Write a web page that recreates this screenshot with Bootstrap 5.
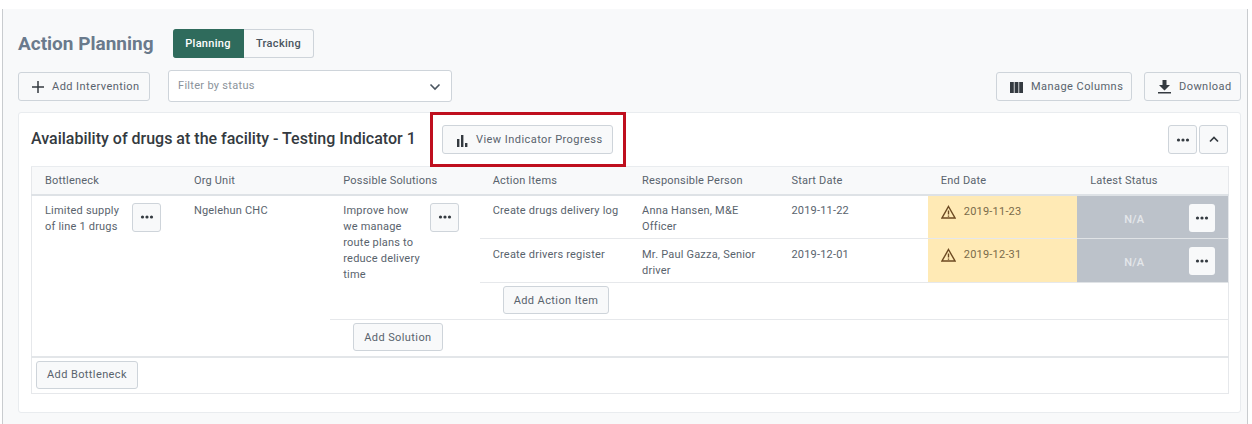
<!DOCTYPE html>
<html lang="en">
<head>
  <meta charset="UTF-8">
  <title>Action Planning</title>
  <link href="https://cdn.jsdelivr.net/npm/bootstrap@5.3.3/dist/css/bootstrap.min.css" rel="stylesheet">
  <style>
    html, body { height: 424px; overflow: hidden; }
    body {
      background: #fff;
      font-family: Roboto, "Liberation Sans", sans-serif;
      color: #4a5560;
    }
    .page-panel {
      margin: 9px 4px 0 2px;
      height: 415px;
      padding: 20px 6px 0 15px;
      background: #f8f9fa;
      border-left: 1px solid #c9cccf;
      border-right: 1px solid #c9cccf;
    }
    .page-title { font-size: 19px; font-weight: 700; color: #6a7a8c; line-height: 29px; margin: 0; width: 155px; }
    .plain-btn {
      background: #f8f9fa;
      border: 1px solid #ced4da;
      border-radius: 3px;
      color: #59636d;
      font-size: 11px;
      font-weight: 400;
      letter-spacing: .45px;
      height: 29px;
      padding: 1px 10px 0;
      display: inline-flex;
      align-items: center;
      white-space: nowrap;
    }
    .plain-btn svg { flex: none; }
    .mode-toggle .plain-btn { border-radius: 0 3px 3px 0; border-left: 0; width: 70px; justify-content: center; font-weight: 500; letter-spacing: .3px; color: #4a5560; }
    .mode-toggle .plain-btn.is-on { background: #2f6b5c; border-color: #2f6b5c; color: #fff; border-radius: 3px 0 0 3px; width: 71px; }
    .tool-row { margin-top: 12px; height: 32px; }
    .tool-row .plain-btn { padding: 2px 10px 0 13px; }
    .status-select {
      width: 284px; height: 32px; margin-left: 18px;
      background: #fff;
      border: 1px solid #ced4da;
      border-radius: 3px;
      padding: 1px 10px 0 9px;
      font-size: 11px;
      letter-spacing: .3px;
      color: #8b939b;
    }
    .plan-card {
      margin-top: 10px;
      height: 301px;
      background: #fff;
      border: 1px solid #e9ecef;
      border-radius: 3px;
      padding: 12px 12px 0 12px;
    }
    .card-head { height: 29px; margin-bottom: 12px; }
    .card-head h2 { font-size: 16px; font-weight: 500; color: #343a40; margin: 0 0 2px; width: 411px; white-space: nowrap; }
    .card-head .highlight-wrap { position: relative; }
    .highlight-wrap .plain-btn { width: 171px; padding: 2px 10px 0 13px; }
    .red-box {
      position: absolute;
      left: -12px; top: -13px;
      width: 196px; height: 55px;
      border: 3px solid #bf0f1e;
      pointer-events: none;
    }
    .icon-btn { width: 29px; padding: 0; justify-content: center; }
    .plan-table {
      table-layout: fixed;
      width: 1197px;
      border-collapse: collapse;
      font-size: 11px;
      letter-spacing: .2px;
      line-height: 16px;
      color: #59636d;
      border: 1px solid #e6e8eb;
      border-top: 1px solid #e9ecef;
    }
    .plan-table th {
      background: #f8f9fa;
      font-weight: 400;
      width: 149.4px;
      height: 28px;
      padding: 2px 13px 0;
      border-bottom: 2px solid #dee2e6;
      color: #59636d;
    }
    .plan-table th:last-child { width: 151.2px; }
    .plan-table td { padding: 8px 13px 0; vertical-align: top; }
    .plan-table .line-b { border-bottom: 1px solid #e6e8eb; }
    .plan-table .line-major { border-bottom: 2px solid #e3e6e9; }
    .plan-table .cell-text { padding-right: 4px; }
    .row-item td { height: 44px; }
    .plan-table .row-first td { padding-top: 7px; }
    .plan-table .row-addaction td { height: 37px; padding: 3px 0 0 23px; }
    .plan-table .row-addsolution td { height: 37px; padding: 3px 0 0 23px; }
    .plan-table .row-addbottleneck td { height: 37px; padding: 3px 0 0 4px; }
    .cell-due { background: #ffeab5; color: #7a6a4a; }
    .plan-table .row-item td.cell-due { padding-top: 8px; }
    .cell-status { background: #bcc2ca; color: #e4e7ea; font-weight: 500; border-bottom: 1px solid #e0e3e6; }
    .plan-table td.cell-status { padding: 8px 13px 0 47px; }
    .small-more { width: 29px; height: 29px; padding: 0; justify-content: center; flex: none; }
    .cell-status .small-more { width: 26px; height: 28px; background: #f8f9fa; border: 0; }
    .more-wrap { gap: 7px; }
    .more-wrap span { width: 80px; flex: none; }
    .add-btn { height: 28px; letter-spacing: .4px; }
  </style>
</head>
<body>
  <div class="page-panel">
    <div class="d-flex align-items-center">
      <h1 class="page-title">Action Planning</h1>
      <div class="mode-toggle d-flex">
        <button class="plain-btn is-on" type="button">Planning</button>
        <button class="plain-btn" type="button">Tracking</button>
      </div>
    </div>

    <div class="tool-row d-flex align-items-center">
      <button class="plain-btn" type="button" style="width:132px">
        <svg class="me-2" width="12" height="12" viewBox="0 0 12 12"><path d="M6 0v12M0 6h12" stroke="#343a40" stroke-width="1.500"/></svg>
        Add Intervention
      </button>
      <div class="status-select d-flex align-items-center justify-content-between">
        <span>Filter by status</span>
        <svg width="12" height="8" viewBox="0 0 12 8"><path d="M1.500 1.500 6 6l4.500-4.500" fill="none" stroke="#4a5560" stroke-width="1.600"/></svg>
      </div>
      <button class="plain-btn ms-auto" type="button" style="width:136px">
        <svg class="me-2" width="13" height="11" viewBox="0 0 13 11"><path d="M0 0h3.800v11H0zM4.600 0h3.800v11H4.600zM9.200 0H13v11H9.200z" fill="#343a40"/></svg>
        Manage Columns
      </button>
      <button class="plain-btn" type="button" style="width:97px;margin-left:12px">
        <svg class="me-2" width="13" height="14" viewBox="0 0 13 14"><path d="M4.500 0h4v5H12L6.500 10.500 1 5h3.500zM0 12h13v1.600H0z" fill="#343a40"/></svg>
        Download
      </button>
    </div>

    <div class="plan-card">
      <div class="card-head d-flex align-items-center">
        <h2>Availability of drugs at the facility - Testing Indicator 1</h2>
        <div class="highlight-wrap">
          <button class="plain-btn" type="button">
            <svg class="me-2" width="12" height="12" viewBox="0 0 12 12"><path d="M1 4h2.400v8H1zM5 0h2.400v12H5zM9 8h2.400v4H9z" fill="#343a40"/></svg>
            View Indicator Progress
          </button>
          <span class="red-box"></span>
        </div>
        <button class="plain-btn icon-btn ms-auto" type="button" aria-label="More">
          <svg width="14" height="4" viewBox="0 0 14 4"><circle cx="2.500" cy="2" r="1.600" fill="#343a40"/><circle cx="7" cy="2" r="1.600" fill="#343a40"/><circle cx="11.500" cy="2" r="1.600" fill="#343a40"/></svg>
        </button>
        <button class="plain-btn icon-btn" type="button" aria-label="Collapse" style="margin-left:2px">
          <svg width="10" height="7" viewBox="0 0 10 7"><path d="M1 5.500 5 1.500l4 4" fill="none" stroke="#343a40" stroke-width="1.700"/></svg>
        </button>
      </div>

      <table class="plan-table">
        <thead>
          <tr>
            <th>Bottleneck</th><th>Org Unit</th><th>Possible Solutions</th><th>Action Items</th>
            <th>Responsible Person</th><th>Start Date</th><th>End Date</th><th>Latest Status</th>
          </tr>
        </thead>
        <tbody>
          <tr class="row-item row-first">
            <td rowspan="4" class="line-major">
              <div class="more-wrap d-flex">
                <span>Limited supply of line 1 drugs</span>
                <button class="plain-btn small-more" type="button" aria-label="More">
                  <svg width="14" height="4" viewBox="0 0 14 4"><circle cx="2.500" cy="2" r="1.600" fill="#343a40"/><circle cx="7" cy="2" r="1.600" fill="#343a40"/><circle cx="11.500" cy="2" r="1.600" fill="#343a40"/></svg>
                </button>
              </div>
            </td>
            <td rowspan="4" class="line-major">Ngelehun CHC</td>
            <td rowspan="3" class="line-b">
              <div class="more-wrap d-flex">
                <span>Improve how we manage route plans to reduce delivery time</span>
                <button class="plain-btn small-more" type="button" aria-label="More">
                  <svg width="14" height="4" viewBox="0 0 14 4"><circle cx="2.500" cy="2" r="1.600" fill="#343a40"/><circle cx="7" cy="2" r="1.600" fill="#343a40"/><circle cx="11.500" cy="2" r="1.600" fill="#343a40"/></svg>
                </button>
              </div>
            </td>
            <td class="line-b cell-text">Create drugs delivery log</td>
            <td class="line-b">Anna Hansen, M&amp;E Officer</td>
            <td class="line-b">2019-11-22</td>
            <td class="line-b cell-due">
              <div class="d-flex align-items-center gap-2">
                <svg width="15" height="14" viewBox="0 0 15 14"><path d="M7.500 1.500 14 13H1zM7.500 5.500v4M7.500 10.500v1.200" fill="none" stroke="#6d4a22" stroke-width="1.400"/></svg>
                <span>2019-11-23</span>
              </div>
            </td>
            <td class="cell-status">
              <div class="d-flex justify-content-between align-items-center">
                <span class="pt-1">N/A</span>
                <button class="plain-btn small-more" type="button" aria-label="More">
                  <svg width="14" height="4" viewBox="0 0 14 4"><circle cx="2.500" cy="2" r="1.600" fill="#343a40"/><circle cx="7" cy="2" r="1.600" fill="#343a40"/><circle cx="11.500" cy="2" r="1.600" fill="#343a40"/></svg>
                </button>
              </div>
            </td>
          </tr>
          <tr class="row-item">
            <td class="line-b cell-text">Create drivers register</td>
            <td class="line-b">Mr. Paul Gazza, Senior driver</td>
            <td class="line-b">2019-12-01</td>
            <td class="line-b cell-due">
              <div class="d-flex align-items-center gap-2">
                <svg width="15" height="14" viewBox="0 0 15 14"><path d="M7.500 1.500 14 13H1zM7.500 5.500v4M7.500 10.500v1.200" fill="none" stroke="#6d4a22" stroke-width="1.400"/></svg>
                <span>2019-12-31</span>
              </div>
            </td>
            <td class="cell-status">
              <div class="d-flex justify-content-between align-items-center">
                <span class="pt-1">N/A</span>
                <button class="plain-btn small-more" type="button" aria-label="More">
                  <svg width="14" height="4" viewBox="0 0 14 4"><circle cx="2.500" cy="2" r="1.600" fill="#343a40"/><circle cx="7" cy="2" r="1.600" fill="#343a40"/><circle cx="11.500" cy="2" r="1.600" fill="#343a40"/></svg>
                </button>
              </div>
            </td>
          </tr>
          <tr class="row-addaction">
            <td colspan="5" class="line-b"><button class="plain-btn add-btn" type="button">Add Action Item</button></td>
          </tr>
          <tr class="row-addsolution">
            <td colspan="6" class="line-major"><button class="plain-btn add-btn" type="button">Add Solution</button></td>
          </tr>
          <tr class="row-addbottleneck">
            <td colspan="8"><button class="plain-btn add-btn" type="button">Add Bottleneck</button></td>
          </tr>
        </tbody>
      </table>
    </div>
  </div>
  <script src="https://cdn.jsdelivr.net/npm/bootstrap@5.3.3/dist/js/bootstrap.bundle.min.js"></script>
</body>
</html>
